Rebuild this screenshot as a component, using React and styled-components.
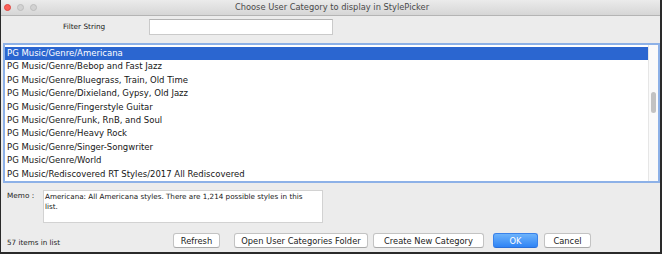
import React from 'react';
import styled, { createGlobalStyle } from 'styled-components';

const GlobalStyle = createGlobalStyle`
  html, body {
    margin: 0;
    padding: 0;
    background: #ececec;
  }
  * {
    box-sizing: border-box;
  }
`;

const Window = styled.div`
  width: 662px;
  height: 254px;
  display: flex;
  flex-direction: column;
  background: #ececec;
  border-left: 1px solid #2a2a2a;
  border-right: 2px solid #2a2a2a;
  border-bottom: 2px solid #2a2a2a;
  font-family: "DejaVu Sans", "Liberation Sans", sans-serif;
  color: #1b1b1b;
  overflow: hidden;
`;

const TitleBar = styled.div`
  flex: none;
  height: 16px;
  display: grid;
  grid-template-columns: 1fr auto 1fr;
  align-items: center;
  padding-left: 3px;
  background: linear-gradient(#ebebeb, #d6d6d6);
  border-bottom: 1px solid #b4b4b4;
`;

const Lights = styled.div`
  display: flex;
  gap: 6px;
`;

const Light = styled.span`
  width: 7px;
  height: 7px;
  border-radius: 50%;
  background: ${p => p.$color};
  border: 0.5px solid ${p => p.$edge};
`;

const Title = styled.div`
  font-size: 8.3px;
  line-height: 1;
  color: #4a4a4a;
`;

const FilterRow = styled.div`
  flex: none;
  display: flex;
  align-items: center;
  height: 16px;
  margin-top: 3px;
  padding-left: 62px;
`;

const SmallLabel = styled.div`
  font-size: 7.3px;
  line-height: 9.5px;
  width: ${p => p.$w}px;
`;

const TextInput = styled.div`
  width: 184px;
  height: 16px;
  background: #fff;
  border: 1px solid #cacaca;
  border-top-color: #b3b3b3;
`;

const ListBox = styled.div`
  flex: none;
  height: 140px;
  margin: 8px 0 0 2px;
  border: 2px solid #8db1e7;
  background: #fff;
  display: grid;
  grid-template-columns: 1fr 10px;
  overflow: hidden;
`;

const Rows = styled.div`
  padding-top: 2px;
  overflow: hidden;
`;

const Row = styled.div`
  height: 13.4px;
  line-height: 13.4px;
  padding-left: 2px;
  font-size: 8.5px;
  white-space: nowrap;
  background: ${p => (p.$selected ? '#2b66d0' : 'transparent')};
  color: ${p => (p.$selected ? '#fff' : '#151515')};
`;

const Track = styled.div`
  background: #fafafa;
  border-left: 1px solid #e6e6e6;
`;

const Thumb = styled.div`
  width: 5px;
  height: 21px;
  margin: ${p => p.$offset}px 0 0 2px;
  border-radius: 3px;
  background: #c2c2c2;
`;

const MemoRow = styled.div`
  flex: none;
  display: flex;
  margin-top: 7px;
  padding-left: 6px;
`;

const MemoBox = styled.div`
  width: 280px;
  height: 33px;
  background: #fff;
  border: 1px solid #d2d2d2;
  padding: 1px 16px 0 1px;
  font-size: 7.2px;
  line-height: 9.5px;
  color: #151515;
`;

const BottomRow = styled.div`
  flex: none;
  display: flex;
  align-items: center;
  height: 15px;
  margin-top: 10px;
`;

const Status = styled.div`
  flex: 0 0 172px;
  padding: 3px 0 0 6px;
  font-size: 7.2px;
`;

const Button = styled.div`
  flex: none;
  width: ${p => p.$w}px;
  height: 15px;
  margin-left: ${p => p.$gap || 0}px;
  display: flex;
  align-items: center;
  justify-content: center;
  font-size: 8.3px;
  border-radius: 3px;
  border: 1px solid ${p => (p.$primary ? '#3a82ea' : '#c3c3c3')};
  border-bottom-color: ${p => (p.$primary ? '#2a6fd8' : '#a9a9a9')};
  background: ${p => (p.$primary ? 'linear-gradient(#6db3fb, #2f84f5)' : '#fff')};
  color: ${p => (p.$primary ? '#fff' : '#1b1b1b')};
`;

const categories = [
  'PG Music/Genre/Americana',
  'PG Music/Genre/Bebop and Fast Jazz',
  'PG Music/Genre/Bluegrass, Train, Old Time',
  'PG Music/Genre/Dixieland, Gypsy, Old Jazz',
  'PG Music/Genre/Fingerstyle Guitar',
  'PG Music/Genre/Funk, RnB, and Soul',
  'PG Music/Genre/Heavy Rock',
  'PG Music/Genre/Singer-Songwriter',
  'PG Music/Genre/World',
  'PG Music/Rediscovered RT Styles/2017 All Rediscovered',
];

const buttons = [
  { label: 'Refresh', w: 47 },
  { label: 'Open User Categories Folder', w: 134, gap: 14 },
  { label: 'Create New Category', w: 111, gap: 5 },
  { label: 'OK', w: 45, gap: 9, primary: true },
  { label: 'Cancel', w: 47, gap: 6 },
];

const App = () => {
  const selected = 0;

  return (
    <>
      <GlobalStyle />
      <Window>
        <TitleBar>
          <Lights>
            <Light $color="#fc5f57" $edge="#de4640" />
            <Light $color="#d2d2d2" $edge="#bdbdbd" />
            <Light $color="#d2d2d2" $edge="#bdbdbd" />
          </Lights>
          <Title>Choose User Category to display in StylePicker</Title>
          <div />
        </TitleBar>

        <FilterRow>
          <SmallLabel $w={86}>Filter String</SmallLabel>
          <TextInput />
        </FilterRow>

        <ListBox>
          <Rows>
            {categories.map((name, i) => (
              <Row key={name} $selected={i === selected}>{name}</Row>
            ))}
          </Rows>
          <Track>
            <Thumb $offset={47} />
          </Track>
        </ListBox>

        <MemoRow>
          <SmallLabel $w={36} style={{ paddingTop: 1 }}>Memo :</SmallLabel>
          <MemoBox>
            Americana: All Americana styles. There are 1,214 possible styles in this list.
          </MemoBox>
        </MemoRow>

        <BottomRow>
          <Status>57 items in list</Status>
          {buttons.map(b => (
            <Button key={b.label} $w={b.w} $gap={b.gap} $primary={b.primary}>
              {b.label}
            </Button>
          ))}
        </BottomRow>
      </Window>
    </>
  );
};

export default App;
